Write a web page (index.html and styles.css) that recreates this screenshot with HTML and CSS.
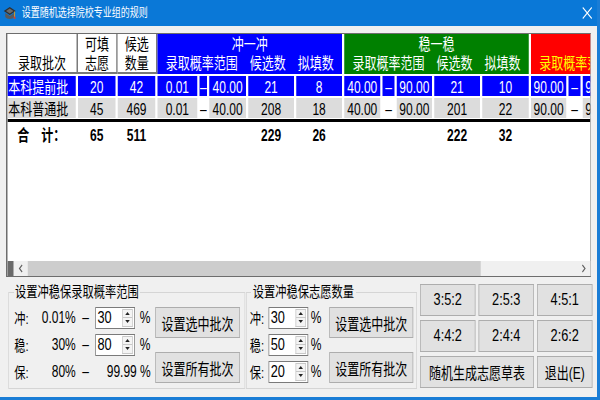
FILE: index.html
```html
<!DOCTYPE html>
<html lang="zh-CN">
<head>
    <meta charset="UTF-8">
    <title>设置随机选择院校专业组的规则</title>
    <link rel="stylesheet" href="styles.css">
</head>
<body>
    <div class="window">
        <div class="titlebar">
            <svg class="app-icon" width="18" height="16" viewBox="0 0 18 16">
                <path d="M3 8v4c2 2.5 10 2.5 12 0V8l-6 3z" fill="#5a5a5a"/>
                <polygon points="9,2 17,6 9,10 1,6" fill="#2e2e2e"/>
                <polygon points="9,3.5 14,6 9,8.5 4,6" fill="#6b6b6b"/>
                <line x1="15.5" y1="6.5" x2="15.5" y2="12" stroke="#e0a020" stroke-width="1.2"/>
                <circle cx="15.5" cy="12.8" r="1.3" fill="#d8402a"/>
            </svg>
            <span class="title">设置随机选择院校专业组的规则</span>
            <svg class="close-btn" width="14" height="12" viewBox="0 0 14 12">
                <path d="M1 0.5L13 11.5M13 0.5L1 11.5" stroke="#fff" stroke-width="1.3"/>
            </svg>
        </div>

        <div class="client">
            <div class="grid">
                <div class="grid-view">
                    <div class="grid-head">
                        <div class="hcell"><span>录取批次</span></div>
                        <div class="hcell"><span>可填<br>志愿</span></div>
                        <div class="hcell"><span>候选<br>数量</span></div>
                        <div class="hgroup chong">
                            <div class="gtitle">冲一冲</div>
                            <div class="gsub">录取概率范围　候选数　拟填数</div>
                        </div>
                        <div class="hgroup wen">
                            <div class="gtitle">稳一稳</div>
                            <div class="gsub">录取概率范围　候选数　拟填数</div>
                        </div>
                        <div class="hgroup bao">
                            <div class="gtitle"></div>
                            <div class="gsub">录取概率范围</div>
                        </div>
                    </div>

                    <div class="grid-row first selected">
                        <div class="cell name">本科提前批</div>
                        <div class="cell">20</div>
                        <div class="cell">42</div>
                        <div class="cell">0.01</div>
                        <div class="cell dash">–</div>
                        <div class="cell">40.00</div>
                        <div class="cell">21</div>
                        <div class="cell">8</div>
                        <div class="cell">40.00</div>
                        <div class="cell dash">–</div>
                        <div class="cell">90.00</div>
                        <div class="cell">21</div>
                        <div class="cell">10</div>
                        <div class="cell">90.00</div>
                        <div class="cell dash">–</div>
                        <div class="cell">99.99</div>
                        <div class="cell"></div>
                        <div class="cell"></div>
                    </div>
                    <div class="grid-row normal">
                        <div class="cell name">本科普通批</div>
                        <div class="cell">45</div>
                        <div class="cell">469</div>
                        <div class="cell">0.01</div>
                        <div class="cell dash">–</div>
                        <div class="cell">40.00</div>
                        <div class="cell">208</div>
                        <div class="cell">18</div>
                        <div class="cell">40.00</div>
                        <div class="cell dash">–</div>
                        <div class="cell">90.00</div>
                        <div class="cell">201</div>
                        <div class="cell">22</div>
                        <div class="cell">90.00</div>
                        <div class="cell dash">–</div>
                        <div class="cell">99.99</div>
                        <div class="cell"></div>
                        <div class="cell"></div>
                    </div>
                    <div class="grid-row total">
                        <div class="cell name">合　计：</div>
                        <div class="cell">65</div>
                        <div class="cell">511</div>
                        <div class="cell"></div>
                        <div class="cell"></div>
                        <div class="cell"></div>
                        <div class="cell">229</div>
                        <div class="cell">26</div>
                        <div class="cell"></div>
                        <div class="cell"></div>
                        <div class="cell"></div>
                        <div class="cell">222</div>
                        <div class="cell">32</div>
                    </div>
                </div>

                <div class="hscroll">
                    <span class="hs-mark"></span>
                    <span class="hs-arrow">
                        <svg width="8" height="9" viewBox="0 0 8 9"><path d="M5.5 1L2 4.5L5.5 8" fill="none" stroke="#606060" stroke-width="1.4"/></svg>
                    </span>
                    <span class="hs-thumb"></span>
                    <span class="hs-track"></span>
                    <span class="hs-arrow">
                        <svg width="8" height="9" viewBox="0 0 8 9"><path d="M2.5 1L6 4.5L2.5 8" fill="none" stroke="#606060" stroke-width="1.4"/></svg>
                    </span>
                </div>
            </div>

            <div class="panel">
                <fieldset class="box box-rate">
                    <legend>设置冲稳保录取概率范围</legend>
                    <div class="box-body">
                        <div class="rate-rows">
                            <div class="rate-row">
                                <span class="lbl">冲:</span>
                                <span class="val">0.01%</span>
                                <span class="sep">–</span>
                                <div class="spin">
                                    <span class="spin-val">30</span>
                                    <span class="spin-btns"><i class="up"></i><i class="down"></i></span>
                                </div>
                                <span class="pct">%</span>
                            </div>
                            <div class="rate-row">
                                <span class="lbl">稳:</span>
                                <span class="val">30%</span>
                                <span class="sep">–</span>
                                <div class="spin">
                                    <span class="spin-val">80</span>
                                    <span class="spin-btns"><i class="up"></i><i class="down"></i></span>
                                </div>
                                <span class="pct">%</span>
                            </div>
                            <div class="rate-row">
                                <span class="lbl">保:</span>
                                <span class="val">80%</span>
                                <span class="sep">–</span>
                                <span class="val fixed">99.99 %</span>
                            </div>
                        </div>
                        <div class="btn-col">
                            <button class="btn">设置选中批次</button>
                            <button class="btn">设置所有批次</button>
                        </div>
                    </div>
                </fieldset>

                <fieldset class="box box-count">
                    <legend>设置冲稳保志愿数量</legend>
                    <div class="box-body">
                        <div class="count-rows">
                            <div class="count-row">
                                <span class="lbl">冲:</span>
                                <div class="spin">
                                    <span class="spin-val">30</span>
                                    <span class="spin-btns"><i class="up"></i><i class="down"></i></span>
                                </div>
                                <span class="pct">%</span>
                            </div>
                            <div class="count-row">
                                <span class="lbl">稳:</span>
                                <div class="spin">
                                    <span class="spin-val">50</span>
                                    <span class="spin-btns"><i class="up"></i><i class="down"></i></span>
                                </div>
                                <span class="pct">%</span>
                            </div>
                            <div class="count-row">
                                <span class="lbl">保:</span>
                                <div class="spin">
                                    <span class="spin-val">20</span>
                                    <span class="spin-btns"><i class="up"></i><i class="down"></i></span>
                                </div>
                                <span class="pct">%</span>
                            </div>
                        </div>
                        <div class="btn-col">
                            <button class="btn">设置选中批次</button>
                            <button class="btn">设置所有批次</button>
                        </div>
                    </div>
                </fieldset>

                <div class="ratio-btns">
                    <button class="btn num">3:5:2</button>
                    <button class="btn num">2:5:3</button>
                    <button class="btn num">4:5:1</button>
                    <button class="btn num">4:4:2</button>
                    <button class="btn num">2:4:4</button>
                    <button class="btn num">2:6:2</button>
                    <button class="btn wide">随机生成志愿草表</button>
                    <button class="btn">退出(E)</button>
                </div>
            </div>
        </div>
    </div>
</body>
</html>
```

FILE: styles.css
```css
html, body {
    margin: 0;
    height: 100%;
    overflow: hidden;
}
body {
    background-color: #f0f0f0;
    font-family: 'Liberation Sans', 'Noto Sans CJK SC', sans-serif;
    color: #000;
}

/* the dialog was captured squeezed sideways: lay it out 800 wide, squeeze to 600 */
.window {
    width: 800px;
    height: 400px;
    box-sizing: border-box;
    transform: scaleX(0.75);
    transform-origin: 0 0;
    background-color: #f0f0f0;
    border-right: 4px solid #1a7dd6;
    border-bottom: 3px solid #1a7dd6;
}

.titlebar {
    height: 26px;
    background-color: #0a78d7;
    display: flex;
    align-items: center;
    padding: 0 6px 0 4px;
    color: #fff;
}
.app-icon {
    margin-right: 7px;
}
.title {
    flex: 1;
    font-size: 12px;
    line-height: 26px;
}

.client {
    padding: 7px 0 0 8px;
}

/* data grid */
.grid {
    width: 780px;
    box-sizing: border-box;
    border: 1px solid #6d6d6d;
    border-left-width: 2px;
    border-right-color: #9a9a9a;
    background-color: #fff;
}
.grid-view {
    height: 227px;
    overflow: hidden;
}
.grid-head {
    display: grid;
    grid-template-columns: 94px 53px 53px 249px 249px 249px;
    height: 39px;
}
.hcell {
    display: flex;
    flex-direction: column;
    justify-content: flex-end;
    text-align: center;
    font-size: 16px;
    line-height: 19px;
    background-color: #fff;
    border-right: 2px solid #7a7a7a;
    border-bottom: 2px solid #7a7a7a;
}
.hcell span {
    margin-bottom: -1px;
}
.hgroup {
    margin-right: 3px;
    color: #fff;
    text-align: center;
    white-space: nowrap;
    font-size: 16px;
}
.hgroup.chong { background-color: #0000ff; }
.hgroup.wen { background-color: #008000; }
.hgroup.bao { background-color: #ff0000; color: #ffff00; }
.gtitle {
    height: 19px;
    line-height: 21px;
}
.gsub {
    line-height: 21px;
}
.bao .gsub {
    text-align: left;
    padding-left: 11px;
}

.grid-row {
    display: grid;
    grid-template-columns: 94px 53px 53px 56px 13px 52px 64px 64px 51px 19px 50px 64px 65px 50px 19px 50px 64px 66px;
    height: 20px;
    margin-top: 2px;
}
.grid-row.first {
    margin-top: 3px;
}
.cell {
    margin-right: 3px;
    padding-top: 2px;
    box-sizing: border-box;
    height: 20px;
    text-align: center;
    font-size: 16px;
    line-height: 20px;
    white-space: nowrap;
    overflow: hidden;
}
.cell.name {
    text-align: left;
    padding-left: 1px;
}
.selected .cell {
    background-color: #0000ff;
    color: #fff;
}
.normal .cell {
    background-color: #dcdcdc;
}
.normal .cell.dash {
    background-color: transparent;
}
.grid-row.total {
    height: 24px;
    margin-top: 1px;
    border-top: 3px solid #000;
}
.total .cell {
    height: 24px;
    font-weight: bold;
    line-height: 24px;
}
.total .cell.name {
    padding-left: 13px;
}

.hscroll {
    display: flex;
    height: 15px;
    background-color: #f0f0f0;
}
.hs-mark {
    width: 8px;
    background-color: #6a6a6a;
}
.hs-arrow {
    width: 19px;
    display: flex;
    align-items: center;
    justify-content: center;
}
.hs-thumb {
    width: 604px;
    background-color: #cdcdcd;
}
.hs-track {
    flex: 1;
}

/* bottom controls */
.panel {
    display: flex;
    height: 105px;
    margin-top: 7px;
    padding-left: 3px;
}
.box {
    margin: 0;
    padding: 0;
    box-sizing: border-box;
    height: 105px;
    border: 1px solid #d5d5d5;
    min-inline-size: 0;
}
.box legend {
    margin-left: 6px;
    padding: 0 2px;
    font-size: 15px;
    line-height: 16px;
}
.box-rate {
    width: 316px;
}
.box-count {
    width: 228px;
    margin-left: 1px;
}
.box-body {
    display: flex;
}
.box-rate .box-body {
    padding-left: 7px;
}
.box-count .box-body {
    padding-left: 4px;
}

.rate-rows,
.count-rows {
    margin-top: 4px;
}
.rate-row,
.count-row {
    display: grid;
    align-items: center;
    height: 27px;
    font-size: 16px;
}
.rate-row {
    grid-template-columns: 26px 56px 26px 53px 27px;
}
.count-row {
    grid-template-columns: 25px 53px 21px;
}
.lbl {
    font-size: 15px;
}
.val {
    text-align: right;
}
.val.fixed {
    grid-column: 4 / span 2;
    padding-right: 6px;
}
.sep {
    text-align: center;
}
.pct {
    text-align: center;
}

.spin {
    display: flex;
    height: 22px;
    box-sizing: border-box;
    border: 1px solid #7a7a7a;
    background-color: #fff;
}
.spin-val {
    flex: 1;
    padding-left: 2px;
    font-size: 17px;
    line-height: 20px;
}
.spin-btns {
    width: 14px;
    margin: 1px 2px 1px 0;
    display: flex;
    flex-direction: column;
}
.spin-btns i {
    flex: 1;
    display: flex;
    align-items: center;
    justify-content: center;
    border: 1px solid #c8c8c8;
    background-color: #f4f4f4;
}
.spin-btns i + i {
    border-top: none;
}
.spin-btns i::after {
    content: '';
    border-left: 3px solid transparent;
    border-right: 3px solid transparent;
}
.spin-btns .up::after {
    border-bottom: 3px solid #222;
}
.spin-btns .down::after {
    border-top: 3px solid #222;
}

.btn-col {
    display: flex;
    flex-direction: column;
    gap: 14px;
    margin-top: 7px;
}
.box-count .btn-col {
    margin-left: 7px;
}
.btn {
    margin: 0;
    padding: 0;
    height: 31px;
    font-family: 'Liberation Sans', 'Noto Sans CJK SC', sans-serif;
    font-size: 16px;
    color: #000;
    background-color: #e1e1e1;
    border: 1px solid #adadad;
}
.btn-col .btn {
    width: 113px;
}
.box-count .btn-col .btn {
    width: 112px;
}

.ratio-btns {
    display: grid;
    grid-template-columns: 74px 74px 74px;
    grid-template-rows: repeat(3, 32px);
    gap: 4px;
    margin-left: 4px;
}
.ratio-btns .btn {
    height: 32px;
}
.ratio-btns .num {
    font-size: 17px;
}
.ratio-btns .wide {
    grid-column: span 2;
}
```
